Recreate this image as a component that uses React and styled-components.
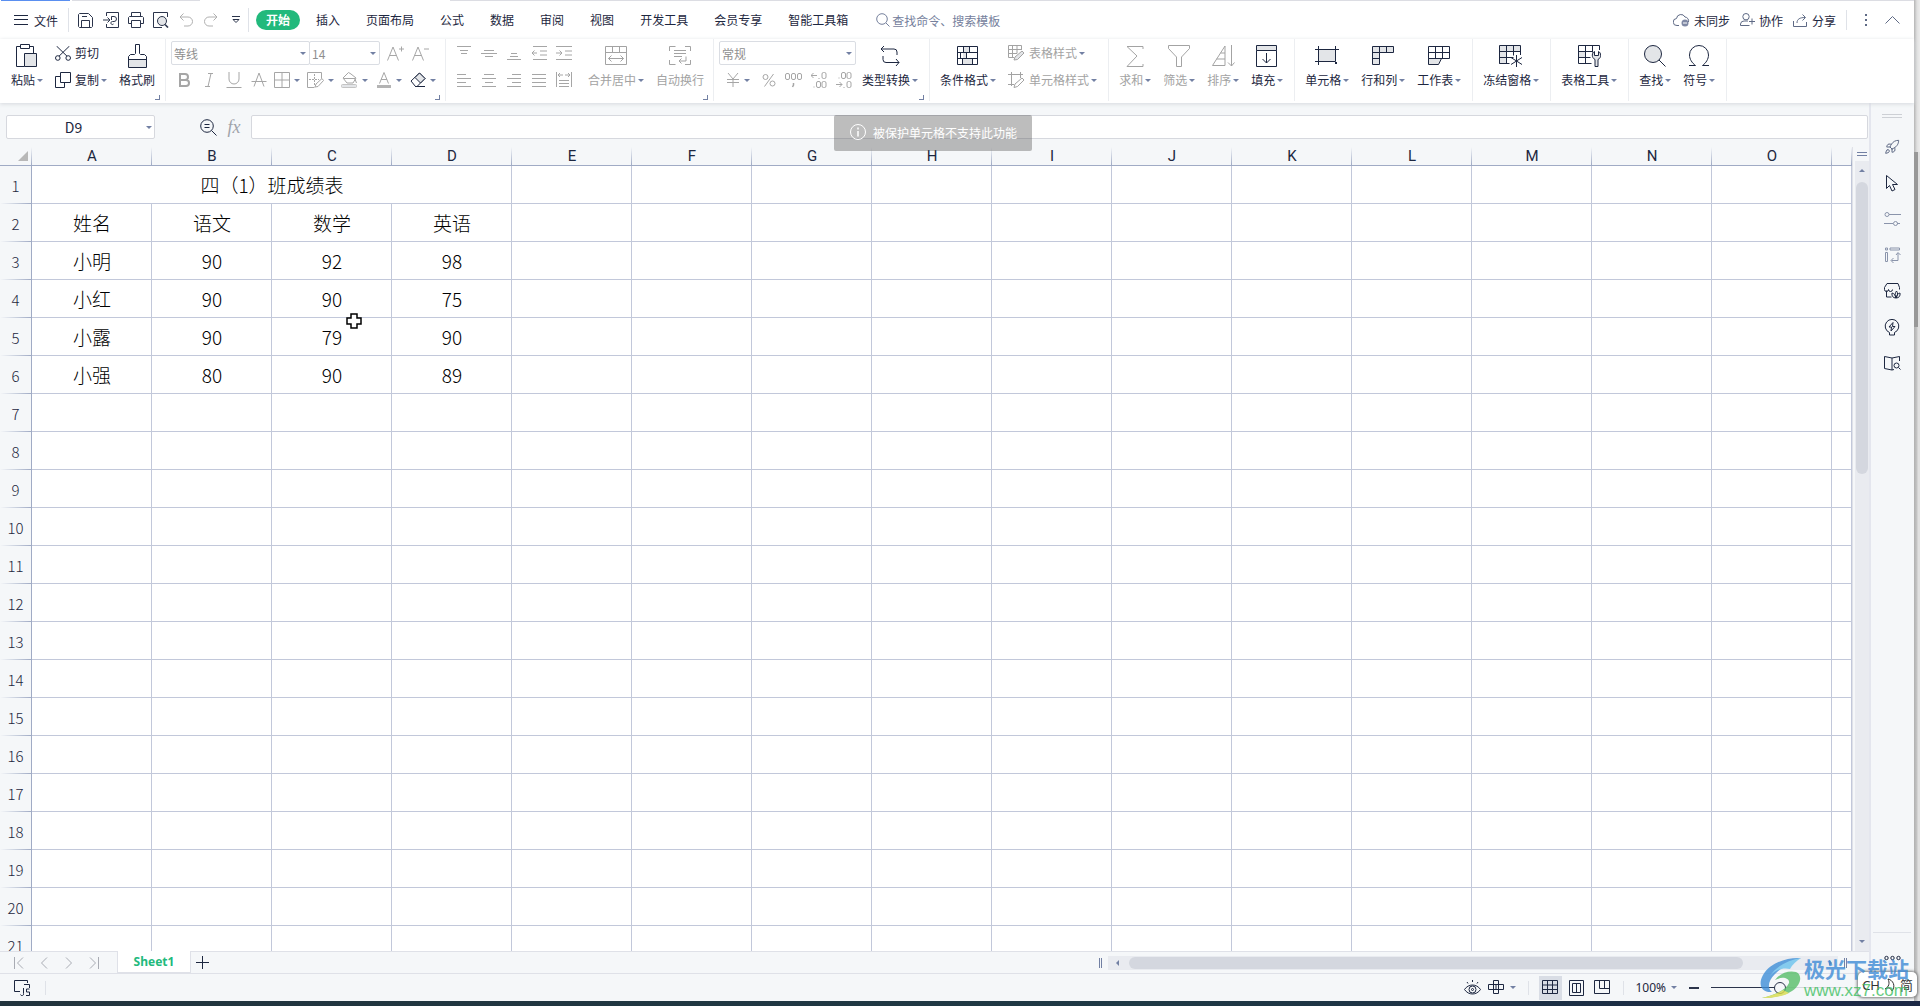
import React from 'react'
import styled, { createGlobalStyle } from 'styled-components'
import { Rocket } from 'lucide-react'

const GlobalStyle = createGlobalStyle`
    *{
        box-sizing:border-box;
    }
    body{
        margin:0;
        font-family:"Noto Sans CJK SC", sans-serif;
        font-size:12px;
        color:#1d2740;
        background:#e3e3e3;
    }
    button, input, select{
        font:inherit;
        color:inherit;
        border:none;
        background:none;
        padding:0;
        margin:0;
        outline:none;
    }
`

/* ---------- icons ---------- */
const G = "#e3e5e8"
const icons = {
    menu: [14, 12, <path d="M0 1.5h14M0 5.5h14M0 10.5h14" />],
    save: [15, 15, <path d="M1.5.5h9l4 4v9l-1 1h-12l-1-1v-12zM4 3.5h5M3.5 14.5v-7h8v7" />],
    exportDoc: [16, 16, <path d="M3.5 4V.5h12v15h-12V12M0 8h7M4.500 5.500 7 8 4.500 10.500M8.500 8V4.500H11a2.500 2.500 0 0 1 0 5H9.500a1.500 1.500 0 1 0 1 2.500" />],
    print: [16, 16, <path d="M3.5 4.5v-4h9v4M3.5 11.500h-3v-6l1-1h13l1 1v6h-3M3.5 8.5h9v7h-9z" />],
    preview: [16, 16, <><path d="M14.500 5V.5H.5v15H9" /><circle cx="9" cy="9" r="4.500" fill={G} /><path d="M12 12.500l3 3" strokeWidth="1.600" /></>],
    undo: [14, 14, <path d="M4.500.500 1 4l3.500 3.500M1 4h8a4.500 4.500 0 0 1 0 9H5" />],
    redo: [14, 14, <path d="M9.500.500 13 4 9.500 7.500M13 4H5a4.500 4.500 0 0 0 0 9h4" />],
    more: [8, 8, <path d="M0 .5h8M1 3.500h6L4 6.500z" />],
    search: [14, 14, <><circle cx="6" cy="6" r="5.300" /><path d="M10 10l3.500 3.500" /></>],
    cloud: [17, 14, <><path d="M6 12.500H4A3.500 3.500 0 0 1 3.500 5.500 4.500 4.500 0 0 1 12 4a4 4 0 0 1 3.500 5" /><circle cx="12" cy="10" r="3.500" fill="#8089a5" stroke="none" /><path d="M10 10h4" stroke="#fff" /></>],
    user: [15, 14, <><circle cx="6" cy="3.700" r="3.200" /><path d="M8 8H4a3.500 3.500 0 0 0-3.500 3v1.500h9M12 5.500v6M9 8.500h6" /></>],
    share: [15, 13, <path d="M.5 7v5.500h13V8M4 9c0-4 3-5.500 8-5.500M9.500.500l3 3-3 3" />],
    dots: [4, 14, <path d="M2 1v2M2 6v2M2 11v2" strokeWidth="2" />],
    up: [15, 8, <path d="M.5 7.500 7.500.500l7 7" />],
    paste: [22, 24, <><path d="M4 2.500H.5v20h8M14 2.500h3.500V9M4.500.500h9v4h-9z" /><path d="M8.500 9.500h12v13h-12z" fill={G} /></>],
    cut: [16, 15, <><circle cx="2.800" cy="12" r="2.300" /><circle cx="13.200" cy="12" r="2.300" /><path d="M1.500 0 12 10.200M14.500 0 4 10.200" /></>],
    copy: [16, 16, <path d="M5.500 4.500h-5v11h9v-5M5.500.500h10v10h-10z" />],
    brush: [19, 24, <><path d="M1 15.500h17v8H1z" fill={G} stroke="none" /><path d="M.5 23.500v-11l2-2h4l1-1v-9h4v9l1 1h4l2 2v11zM.5 15.500h18" /></>],
    bigA: [17, 16, <><path d="M.5 15.500 6 2l5.500 13.500M2.500 10.500h7" /><path d="M12 4h5M14.500 1.500v5" /></>],
    smallA: [17, 16, <><path d="M.5 15.500 6 2l5.500 13.500M2.500 10.500h7" /><path d="M12 4h5" /></>],
    bold: [12, 14, <path d="M2 1h5a3 3 0 0 1 0 6H2zM2 7h6a3 3 0 0 1 0 6H2z" strokeWidth="2" />],
    italic: [10, 14, <path d="M4 .5h5M1 13.500h5M7 .5l-3 13" />],
    underline: [16, 16, <path d="M3 0v7a5 5 0 0 0 10 0V0M.5 15.500h15" />],
    strike: [16, 16, <path d="M3 14.500 8 1l5 13.500M.5 9.500h15" />],
    borders: [16, 16, <path d="M.5.500h15v15H.5zM.5 8h15M8 .5v15" />],
    drawBorder: [17, 16, <><path d="M.5.500h14v6M.5.500v15h7" /><path d="M7.500 2v11M2 7.500h10" strokeDasharray="2 1" /><path d="M8 15l1-3 6-5.500 1.500 2-5.500 6z" /></>],
    bucket: [17, 16, <><path d="M7.500.500 2 6l4 5h6l3-5-5-4zM3 6.500h11M14 7l1.500 4" /><rect x=".5" y="12.500" width="15" height="3" rx="1" fill={G} stroke="#c4c4c4" /></>],
    fontColor: [16, 16, <><path d="M3.500 11.500 8 .5l4.500 11M5 7.500h6" /><path d="M1 14.500h14" strokeWidth="3" stroke="#b4b4b4" /></>],
    eraser: [16, 16, <><path d="M1 9 9.500 1 15 6.500 7 14.500H5.500z" /><path d="M5 5.500 9.500 1 15 6.500 10.500 11z" fill={G} /><path d="M5 14.500h10" /></>],
    alTop: [14, 16, <path d="M0 1.500h14M3 5.500h8M4 8.500h6" />],
    alMid: [16, 16, <path d="M3 5.500h10M0 8.500h16M4 11.500h8" />],
    alBottom: [14, 16, <path d="M4 8.500h6M3 11.500h8M0 14.500h14" />],
    outdent: [16, 16, <path d="M2 1.500h14M9 6h7M9 10h7M2 14.500h14M6 8H1M3.500 5.500 1 8l2.500 2.500" />],
    indent: [16, 16, <path d="M0 1.500h16M9 6h7M9 10h7M0 14.500h16M0 8h6M3.500 5.500 6 8l-2.500 2.500" />],
    alLeft: [14, 16, <path d="M0 2.500h9M0 6.500h14M0 10.500h9M0 14.500h14" />],
    alCenter: [14, 16, <path d="M2 2.500h10M0 6.500h14M3 10.500h8M0 14.500h14" />],
    alRight: [14, 16, <path d="M5 2.500h9M0 6.500h14M5 10.500h9M0 14.500h14" />],
    justify: [14, 16, <path d="M0 2.500h14M0 6.500h14M0 10.500h14M0 14.500h14" />],
    distribute: [16, 16, <path d="M.5 0v15M15.500 0v15M2 3h5M9 3h5M4 1 2 3l2 2M12 1l2 2-2 2M3 8.500h10M3 11.500h10M3 14.500h10" />],
    merge: [23, 20, <path d="M.5.500h21v18H.5zM.5 6.500h21M7.500.500v6M14.500.500v6M3.500 12.500h15M6.500 9.500l-3 3 3 3M15.500 9.500l3 3-3 3" />],
    wrap: [23, 20, <path d="M.5 5V.5h6M16 .5h5.500V5M.5 14v4.500h6M16 18.500h5.500V14M5 4.500h12M5 7.500h12M5 10.500h8M17 10.500v4.500h-7M12.500 12.500 10 15l2.500 2.500" />],
    yuan: [14, 14, <path d="M2 0l5 6 5-6M7 6v8M1 6.500h12M1 9.500h12" />],
    percent: [14, 14, <><circle cx="3.500" cy="4" r="2.500" /><circle cx="10.500" cy="10.500" r="2.500" /><path d="M11.500 1 2.500 13.500" /></>],
    thousands: [18, 16, <><rect x=".5" y="1.500" width="4" height="6" rx="1.500" /><rect x="6.500" y="1.500" width="4" height="6" rx="1.500" /><rect x="12.500" y="1.500" width="4" height="6" rx="1.500" /><path d="M8.500 11v2l-1 2" strokeWidth="1.500" /></>],
    decInc: [16, 16, <><path d="M0 3.500h6M2.500 1 0 3.500 2.500 6M8 6v1M3 14.500v1" /><rect x="11" y=".5" width="4" height="6" rx="1.500" /><rect x="5.500" y="9.500" width="4" height="6" rx="1.500" /><rect x="11" y="9.500" width="4" height="6" rx="1.500" /></>],
    decDec: [16, 16, <><path d="M0 12.500h6M3.500 10 6 12.500 3.500 15M8 15v1M3 5.500v1" /><rect x="5.500" y=".5" width="4" height="6" rx="1.500" /><rect x="11" y=".5" width="4" height="6" rx="1.500" /><rect x="11" y="9.500" width="4" height="6" rx="1.500" /></>],
    convert: [20, 22, <path d="M4 1 1 4l3 3M1 4h13a3 3 0 0 1 3 3v3M16 14l3 3.500-3 3.500M19 17.500H6a3 3 0 0 1-3-3V11" />],
    condFormat: [22, 20, <><path d="M6 .5h6v6H6zM9 6.500h-3v6h3zM1 12.500h14v6H6v-6z" fill={G} stroke="none" /><path d="M.5.500h20v18H.5zM.5 6.500h20M.5 12.500h20M6.500.500v6M12.500.500v6M9.500 6.500v6M5.500 12.500v6M15.500 12.500v6M3.500 6.500v6" /></>],
    tableStyle: [17, 16, <><path d="M13.500 5V.5h-13v12H6M.5 4.500h13M.5 8.500H9M4.500.500v12M9 .5v8" /><path d="M6 15l1-3 7-6 2 2-6.500 6.500z" fill={G} /></>],
    cellStyle: [17, 16, <path d="M3.500 0v14M0 2.500h15M12.500 0v6M0 12.500h6M6 15.500l1-3.500 7-6 2 2-6.500 6.500z" />],
    sum: [18, 21, <path d="M17 3V.5H1L11 10 1 20.500h16V18" />],
    filter: [22, 22, <path d="M.5.500h21v3L13.500 12v9.500h-5V12L.5 3.500z" />],
    sort: [23, 22, <path d="M.5 20.500 13 1v19.500zM8.500 8h4.500M4.500 14h8.500M19.500 0v21M16 17.500l3.500 3.500 3-3.500" />],
    fill: [22, 23, <><path d="M.5.500h20v5H.5z" fill={G} /><path d="M.5 5.500v16h20v-16M10.500 8v10M6.500 14l4 4 4-4" /></>],
    cell: [24, 20, <><path d="M3.500 3.500h17v12h-17z" fill={G} /><path d="M3.500 0v19M20.500 0v13M0 3.500h24M0 15.500h19" /><path d="M20 17h2" strokeWidth="2" /></>],
    rowCol: [23, 20, <><path d="M.5.500h21v6H7.500v12h-7z" fill={G} /><path d="M.5 6.500h7v-6M14.500.500v6M.5 12.500h7" /></>],
    worksheet: [23, 20, <><path d="M.5 12.500h13l-3 6H.5z" fill={G} /><path d="M.5.500h21v12H.5zM.5 6.500h21M7.500.500v12M14.500.500v12" /></>],
    freeze: [24, 22, <><path d="M.5.500h21v6h-14v12h-7z" fill={G} /><path d="M.5 6.500h7v-6M14.500.500v6M.5 12.500h14M.5 18.500h10M14.500 6.500v4M21.500 6v4M17.500 10v12M12 12.500l11 7M23 12.500l-11 7" /></>],
    tableTool: [23, 22, <><path d="M.5 6.500h7v6h-7z" fill={G} /><path d="M21.500 5V.5H.5v18h13M.5 6.500h14M.5 12.500h12M7.500.500v18M14.500.500v7" /><path d="M17 21.500v-7c-4-2-3-7-.5-8v4h4v-4c2.500 1 3.500 6-.5 8v7z" fill={G} /></>],
    find: [22, 22, <><circle cx="9" cy="9" r="8.500" fill={G} /><path d="M15 15l6.500 6.500" /></>],
    omega: [22, 22, <path d="M1 20.500h6.500C4 18 1.500 14 1.500 10a9.500 9.500 0 0 1 19 0c0 4-2.500 8-6 10.500H21" />],
    zoomOut: [17, 17, <><circle cx="7" cy="7" r="6.300" /><path d="M4.500 5.500h5M4.500 8.500h5M11.500 11.500l5 5" /></>],
    info: [16, 16, <><circle cx="8" cy="8" r="7.500" /><path d="M8 3.500v2M8 7v5.500" strokeWidth="1.500" /></>],
    pointer: [16, 17, <path d="M2.500.500v13l3-3 2.500 5.500 3-1.500-2.500-5h5z" />],
    sliders: [17, 16, <><circle cx="3" cy="3.500" r="2" /><path d="M5 3.500h12M0 12.500h9M13 12.500h3" /><circle cx="11.500" cy="12.500" r="2" /></>],
    pivot: [17, 16, <path d="M1.500 1h2v2h-2zM6 1h9.500v2H6zM1.500 5.500h2v9h-2zM14 6v7.500H7.500M12 8l2-2.500L16.500 8M9.500 11l-2.500 2.500L9.500 16" />],
    shop: [17, 16, <><path d="M2.500 7.500v6.500h5M3 .5h11l1.500 4v2M.5 6.500v-2L3 .5M.5 6.500a2 2 0 0 0 4 0 2 2 0 0 0 4 0" /><path d="M12 15c-3 0-4.500-2-4-5 2 .5 3 1.500 4 5zM12 15c-1.500-3-1-5 .5-7 1.500 2 1.500 4-.5 7zM12 15c3 0 4.500-2 4-5-2 .5-3 1.500-4 5z" /></>],
    bulb: [16, 17, <><path d="M5.500 16v-2.500a6.800 6.800 0 1 1 5 0V16z" /><path d="M9 3.500 5 8h2.500l-.5 4 4-4.500H8.500z" /></>],
    book: [17, 15, <><path d="M8 2 .5.500v12L8 14zM8 2l7.500-1.500V5M8 14l2-.5" /><circle cx="12.500" cy="9.500" r="2.500" /><path d="M14.500 11.500l2 2" /></>],
    first: [10, 12, <path d="M.5 0v12M9 .5 3.500 6 9 11.500" />],
    prev: [8, 12, <path d="M7 .5 1.500 6 7 11.500" />],
    next: [8, 12, <path d="M1 .5 6.500 6 1 11.500" />],
    last: [10, 12, <path d="M9.500 0v12M1 .5 6.500 6 1 11.500" />],
    plus: [13, 13, <path d="M6.500 0v13M0 6.500h13" />],
    macro: [17, 16, <path d="M6 11.500H.5v-11h13V3M10 4.500h5.500V8M9.500 8v5.500a1.500 1.500 0 0 1-3 1M15.500 9h-3v3h3v3.500h-3.500" />],
    eye: [17, 16, <><path d="M.5 9.500c4-6 12-6 16 0-4 6-12 6-16 0z" /><circle cx="8.500" cy="9.500" r="3.500" /><circle cx="8.500" cy="9.500" r="1" /><path d="M3 2l1 1.500M8.500 0v2M14 2l-1 1.500" /></>],
    cross: [17, 15, <path d="M5.500.500h5v13h-5zM.5 4.500h15v5H.5zM8 4.500v5" />],
    gridView: [17, 15, <path d="M.5.500h15v13H.5zM.5 5h15M.5 9.500h15M5.500.500v13M10.500.500v13" />],
    pageView: [16, 16, <path d="M.5.500h14v15H.5zM3.500 3.500h8v9h-8zM7.500 3.500v9" />],
    breakView: [17, 15, <path d="M.5.500h15v13H.5zM5.500.500v8h10M10.500.500v8" />],
    triple: [17, 6, <><circle cx="2.500" cy="3" r="1.700" /><circle cx="8.500" cy="3" r="1.700" /><circle cx="14.500" cy="3" r="1.700" /></>],
    moon: [12, 14, <path d="M4 1c5 1 8 7 4 12-1-3-4-4-7-2 4-2 5-6 3-10z" />],
}

const Svg = styled.svg`
    display:block;
    flex:none;
    fill:none;
    stroke:currentColor;
    stroke-width:1;
`
const Icon = ({ name }) => {
    const [w, h, shape] = icons[name]
    return <Svg width={w} height={h} viewBox={`0 0 ${w} ${h}`} aria-hidden="true">{shape}</Svg>
}

const Arrow = styled.span`
    flex:none;
    width:6px;
    border:3px solid transparent;
    border-top-color:#7280a3;
    border-bottom:none;
`

/* ---------- frame ---------- */
const Page = styled.div`
    position:relative;
    display:flex;
    flex-direction:column;
    height:100vh;
    overflow:hidden;
`
const Desktop = styled.div`
    flex:1;
    display:flex;
    min-height:0;
`
const Window = styled.div`
    flex:1;
    display:flex;
    flex-direction:column;
    min-width:0;
    background:#f5f7f9;
`
const Edge = styled.div`
    width:6px;
    display:flex;
    flex-direction:column;
    background:linear-gradient(to right, #b0b0b0, #c6c6c6 3px, #e0e0e0 4px);
`
const EdgeGap = styled.div`
    height:152px;
    background:linear-gradient(to right, #b5b5b5, #e0e0e0 3px, #ececec);
`
const EdgeThumb = styled.div`
    width:4px;
    height:175px;
    background:#989898;
`
const Taskbar = styled.div`
    height:5px;
    background:linear-gradient(to right, #22343d, #1f3945 60%, #1b2744);
`
const DocTabs = styled.div`
    display:flex;
    gap:2px;
    height:1px;
    padding-left:1px;
    background:#fff;
`
const DocTab = styled.span`
    width:${(props) => props.$w};
    flex:${(props) => props.$grow ? "1" : "none"};
    background:${(props) => props.color};
`

/* ---------- menu bar ---------- */
const MenuBar = styled.div`
    display:flex;
    align-items:center;
    height:38px;
    padding:0 14px 0 14px;
    background:#fff;
`
const FileButton = styled.button`
    display:flex;
    align-items:center;
    gap:6px;
`
const VLine = styled.span`
    width:1px;
    height:${(props) => props.$h || "24px"};
    background:#dfe2e8;
    margin:${(props) => props.$m || "0"};
`
const QuickButton = styled.button`
    display:flex;
    align-items:center;
    justify-content:center;
    width:25px;
    height:24px;
    color:${(props) => props.disabled ? "#b0b0b0" : "#2b344b"};
`
const Tabs = styled.nav`
    display:flex;
    margin-left:4px;
`
const Tab = styled.button`
    height:20px;
    line-height:20px;
    padding:${(props) => props.$active ? "0 10px" : "0 13px"};
    margin:${(props) => props.$active ? "0 3px" : "0"};
    border-radius:10px;
    font-weight:${(props) => props.$active && "700"};
    color:${(props) => props.$active && "white"};
    background:${(props) => props.$active && "#22b97c"};
`
const SearchBox = styled.label`
    display:flex;
    align-items:center;
    gap:2px;
    flex:1;
    margin-left:15px;
    color:#75809c;
`
const SearchInput = styled.input`
    width:160px;
    &::placeholder{
        color:#75809c;
        opacity:1;
    }
`
const MenuRight = styled.div`
    display:flex;
    align-items:center;
    gap:10px;
`
const MenuLink = styled.button`
    display:flex;
    align-items:center;
    gap:4px;
    svg{
        color:#5f6a85;
    }
`
const PlainButton = styled.button`
    display:flex;
    color:#5f6a85;
    margin-left:7px;
`

/* ---------- ribbon ---------- */
const Ribbon = styled.div`
    display:flex;
    height:64px;
    background:#fff;
    box-shadow:0 1px 4px #d5d8dd;
    z-index:1;
`
const Group = styled.div`
    position:relative;
    flex:none;
    display:flex;
    align-items:flex-start;
    gap:${(props) => props.$gap || "12px"};
    height:62px;
    padding:${(props) => props.$pad || "2px 11px 0 10px"};
    border-right:1px solid #eceef1;
`
const Launcher = styled.button`
    position:absolute;
    right:5px;
    bottom:1px;
    width:5px;
    height:5px;
    border-right:1px solid #7280a3;
    border-bottom:1px solid #7280a3;
`
const BigButton = styled.button`
    display:flex;
    flex-direction:column;
    align-items:center;
    gap:3px;
    padding-top:3px;
    color:${(props) => props.disabled ? "#a3a3a3" : "#1d2740"};
`
const BigIcon = styled.span`
    display:flex;
    align-items:center;
    justify-content:center;
    height:24px;
`
const Caption = styled.span`
    display:flex;
    align-items:center;
    gap:2px;
    line-height:18px;
    white-space:nowrap;
`
const Rows = styled.div`
    display:flex;
    flex-direction:column;
    gap:3px;
`
const Row = styled.div`
    display:flex;
    align-items:center;
    height:24px;
    padding-left:${(props) => props.$indent && "3px"};
`
const LineButton = styled.button`
    display:flex;
    align-items:center;
    gap:4px;
    height:24px;
    color:${(props) => props.disabled ? "#a3a3a3" : "#1d2740"};
`
const IconButton = styled.button`
    display:flex;
    align-items:center;
    justify-content:center;
    gap:4px;
    width:${(props) => props.$drop ? "34px" : "25px"};
    height:24px;
    padding-right:${(props) => props.$drop && "3px"};
    color:${(props) => props.$on ? "#1d2740" : "#a6a6a6"};
`
const SelectWrap = styled.span`
    display:flex;
    align-items:center;
    width:${(props) => props.$w};
    height:24px;
    margin-right:${(props) => props.$last && "3px"};
    margin-left:${(props) => props.$joined && "-1px"};
    padding-right:3px;
    border:1px solid #dadde3;
    border-radius:2px;
`
const Select = styled.select`
    appearance:none;
    flex:1;
    min-width:0;
    height:22px;
    padding-left:2px;
    color:#8f8f8f;
`

const Big = ({ icon, children, drop, off }) => (
    <BigButton disabled={off}>
        <BigIcon><Icon name={icon} /></BigIcon>
        <Caption>{children}{drop && <Arrow />}</Caption>
    </BigButton>
)
const Line = ({ icon, children, drop, off }) => (
    <LineButton disabled={off}>
        <Icon name={icon} />
        <Caption>{children}{drop && <Arrow />}</Caption>
    </LineButton>
)
const Small = ({ icon, label, drop, on }) => (
    <IconButton $drop={drop} $on={on} aria-label={label} title={label}>
        <Icon name={icon} />{drop && <Arrow />}
    </IconButton>
)
const Dropdown = ({ w, label, value, joined, last }) => (
    <SelectWrap $w={w} $joined={joined} $last={last}>
        <Select aria-label={label} defaultValue={value}><option>{value}</option></Select>
        <Arrow />
    </SelectWrap>
)

/* ---------- sheet ---------- */
const Body = styled.div`
    flex:1;
    display:flex;
    min-height:0;
`
const Main = styled.div`
    position:relative;
    flex:1;
    display:flex;
    flex-direction:column;
    min-width:0;
`
const FormulaBar = styled.div`
    display:flex;
    align-items:center;
    height:44px;
    padding:4px 1px 0 6px;
`
const NameBox = styled.div`
    display:flex;
    align-items:center;
    width:149px;
    height:24px;
    padding-right:2px;
    margin-right:45px;
    background:#fff;
    border:1px solid #d6d8de;
    border-radius:2px;
`
const NameInput = styled.input`
    flex:1;
    min-width:0;
    padding-right:6px;
    text-align:center;
    font-size:14px;
    line-height:20px;
`
const Fx = styled.button`
    width:16px;
    margin:0 9px 0 9px;
    font-family:"Liberation Serif", serif;
    font-style:italic;
    font-size:18px;
    line-height:24px;
    color:#a0a3aa;
`
const FormulaInput = styled.input`
    flex:1;
    height:24px;
    padding:0 6px;
    background:#fff;
    border:1px solid #d6d8de;
    border-radius:2px;
`
const ToastLayer = styled.div`
    position:absolute;
    top:12px;
    left:0;
    right:0;
    display:flex;
    justify-content:center;
    padding-right:3px;
    pointer-events:none;
`
const Toast = styled.div`
    display:flex;
    align-items:center;
    gap:7px;
    height:36px;
    padding:0 15px 2px 16px;
    color:#fff;
    background:rgba(90,90,90,0.4);
    border-radius:2px;
`
const SheetArea = styled.div`
    flex:1;
    display:flex;
    min-height:0;
`
const Viewport = styled.div`
    flex:1;
    min-width:0;
    overflow:hidden;
    background:#fff;
`
const Table = styled.table`
    width:100%;
    table-layout:fixed;
    border-collapse:separate;
    border-spacing:0;
`
const Col = styled.col`
    width:${(props) => props.$w};
`
const ColHead = styled.th`
    height:19px;
    padding:0;
    font-family:Roboto, sans-serif;
    font-size:15px;
    line-height:18px;
    font-weight:400;
    border-bottom:1px solid #a0abc5;
    background:linear-gradient(to bottom, #f5f7f9, #a0abc5) right/1px 100% no-repeat #f5f7f9;
`
const Corner = styled.span`
    display:block;
    margin-left:18px;
    width:10px;
    border-left:10px solid transparent;
    border-bottom:10px solid #b8b8b8;
`
const RowHead = styled.th`
    height:38px;
    padding:0;
    font-size:15px;
    font-weight:300;
    border-right:1px solid #a0abc5;
    background:linear-gradient(to right, #f5f7f9, #a0abc5) bottom/100% 1px no-repeat #f5f7f9;
`
const Cell = styled.td`
    height:38px;
    padding:1px 0 0 1px;
    text-align:center;
    font-size:19px;
    font-weight:300;
    line-height:28px;
    color:#000;
    border-right:1px solid #c2c8da;
    border-bottom:1px solid #c2c8da;
`
const Mouse = styled.svg`
    position:absolute;
    left:346px;
    top:313px;
`
const VScroll = styled.div`
    display:flex;
    flex-direction:column;
    width:17px;
    padding-left:2px;
    border-left:1px solid #dfe1e8;
`
const Splitter = styled.span`
    width:10px;
    height:4px;
    margin:5px 2px;
    border-top:1px solid #7280a3;
    border-bottom:1px solid #7280a3;
`
const Track = styled.div`
    flex:1;
    display:flex;
    flex-direction:column;
    align-items:center;
    padding:8px 1px;
    background:#e9ebf0;
`
const Rail = styled.div`
    flex:1;
    align-self:stretch;
    margin:10px 0;
`
const Thumb = styled.div`
    width:${(props) => props.$w};
    height:${(props) => props.$h};
    border-radius:6px;
    background:#d4d7df;
`
const Tip = styled.span`
    flex:none;
    border:3px solid transparent;
    border-${(props) => props.$side}-color:#7280a3;
    border-${(props) => props.$opposite}:none;
`

/* ---------- side bar ---------- */
const Side = styled.aside`
    display:flex;
    flex-direction:column;
    align-items:center;
    width:45px;
    padding:11px 3px 12px 2px;
    border-left:2px solid #e4e6ee;
`
const Grip = styled.span`
    width:20px;
    height:4px;
    margin-bottom:11px;
    border-top:1px solid #cdd0d5;
    border-bottom:1px solid #cdd0d5;
`
const SideButton = styled.button`
    display:flex;
    align-items:center;
    justify-content:center;
    width:36px;
    height:36px;
    color:${(props) => props.color || "#1d2740"};
`
const SideFoot = styled.div`
    display:flex;
    justify-content:center;
    align-self:stretch;
    margin-top:auto;
    padding-top:22px;
    border-top:1px solid #dfe2e8;
`

/* ---------- bottom bars ---------- */
const TabBar = styled.div`
    display:flex;
    align-items:center;
    height:22px;
    padding:0 16px 0 6px;
    border-top:1px solid #dfe1e8;
`
const NavButton = styled.button`
    display:flex;
    justify-content:center;
    width:25px;
    color:#a8abb3;
`
const SheetTab = styled.button`
    width:74px;
    height:22px;
    margin:-1px 5px 0 11px;
    line-height:21px;
    font-family:"Noto Sans", sans-serif;
    font-weight:700;
    color:#22b97c;
    background:#fff;
    border:1px solid #dfe1e8;
    border-top:none;
`
const Bars = styled.span`
    width:3px;
    height:10px;
    margin:0 6px;
    border-left:1px solid #7280a3;
    border-right:1px solid #7280a3;
`
const HScroll = styled.div`
    display:flex;
    align-items:center;
    width:calc(40% - 9px);
    height:14px;
    padding:1px 6px 1px 8px;
    background:#e9ebf0;
`
const HRail = styled.div`
    flex:1;
    height:12px;
    margin:0 10px;
`
const Spacer = styled.span`
    flex:1;
`
const StatusBar = styled.footer`
    display:flex;
    align-items:center;
    height:28px;
    padding:0 66px 0 14px;
    border-top:1px solid #dfe1e8;
    font-family:"Noto Sans", sans-serif;
`
const StatusButton = styled.button`
    display:flex;
    align-items:center;
    gap:5px;
    margin-right:${(props) => props.$gap};
`
const ViewButton = styled.button`
    display:flex;
    align-items:center;
    justify-content:center;
    width:23px;
    height:24px;
    margin-right:3px;
    background:${(props) => props.$active && "#d9dde5"};
`
const Minus = styled.button`
    width:10px;
    height:2px;
    margin:0 12px 0 12px;
    background:#2b344b;
`
const Zoom = styled.input`
    appearance:none;
    width:137px;
    height:12px;
    background:linear-gradient(to right, #2b344b 50%, #d5d8de 50%) center/100% 1px no-repeat;
    &::-webkit-slider-thumb{
        appearance:none;
        width:12px;
        height:12px;
        border:1px solid #2b344b;
        border-radius:50%;
        background:#f5f7f9;
    }
`
const ImeBox = styled.div`
    position:absolute;
    right:3px;
    bottom:9px;
    display:flex;
    align-items:center;
    gap:4px;
    height:25px;
    padding:0 4px;
    font-family:"Noto Sans", "Noto Sans CJK SC", sans-serif;
    font-size:13px;
    line-height:20px;
    color:#333;
    background:#fff;
    border-radius:5px;
    box-shadow:0 0 3px 1px #777;
`
const Watermark = styled.div`
    position:absolute;
    right:11px;
    bottom:6px;
    display:flex;
    align-items:center;
    gap:1px;
    opacity:0.8;
    pointer-events:none;
`
const MarkText = styled.div`
    font-size:21px;
    line-height:25px;
    font-weight:700;
    color:#3f8bd6;
`
const MarkUrl = styled.div`
    font-family:"Liberation Sans", sans-serif;
    font-size:17px;
    line-height:19px;
    font-weight:400;
    color:#3fc062;
`

const menus = ["开始", "插入", "页面布局", "公式", "数据", "审阅", "视图", "开发工具", "会员专享", "智能工具箱"]
const columns = "ABCDEFGHIJKLMNO".split("")
const scores = [
    ["姓名", "语文", "数学", "英语"],
    ["小明", 90, 92, 98],
    ["小红", 90, 90, 75],
    ["小露", 90, 79, 90],
    ["小强", 80, 90, 89],
]
const rowNumbers = Array.from({ length: 21 }, (_, i) => i + 1)

const Menu = () => (
    <MenuBar>
        <FileButton><Icon name="menu" />文件</FileButton>
        <VLine $m="0 4px 0 10px" />
        <QuickButton aria-label="保存"><Icon name="save" /></QuickButton>
        <QuickButton aria-label="输出"><Icon name="exportDoc" /></QuickButton>
        <QuickButton aria-label="打印"><Icon name="print" /></QuickButton>
        <QuickButton aria-label="预览"><Icon name="preview" /></QuickButton>
        <QuickButton aria-label="撤销" disabled><Icon name="undo" /></QuickButton>
        <QuickButton aria-label="恢复" disabled><Icon name="redo" /></QuickButton>
        <QuickButton aria-label="更多"><Icon name="more" /></QuickButton>
        <VLine />
        <Tabs>
            {menus.map((item, i) => <Tab key={item} $active={i === 0}>{item}</Tab>)}
        </Tabs>
        <SearchBox>
            <Icon name="search" />
            <SearchInput placeholder="查找命令、搜索模板" aria-label="查找命令" />
        </SearchBox>
        <MenuRight>
            <MenuLink><Icon name="cloud" />未同步</MenuLink>
            <MenuLink><Icon name="user" />协作</MenuLink>
            <MenuLink><Icon name="share" />分享</MenuLink>
            <VLine $h="20px" />
            <PlainButton aria-label="更多操作"><Icon name="dots" /></PlainButton>
            <PlainButton aria-label="收起功能区"><Icon name="up" /></PlainButton>
        </MenuRight>
    </MenuBar>
)

const Tools = () => (
    <Ribbon>
        <Group $pad="2px 10px 0 11px">
            <Big icon="paste" drop>粘贴</Big>
            <Rows>
                <Line icon="cut">剪切</Line>
                <Line icon="copy" drop>复制</Line>
            </Rows>
            <Big icon="brush">格式刷</Big>
            <Launcher aria-label="剪贴板" />
        </Group>
        <Group $pad="2px 4px 0 5px">
            <Rows>
                <Row>
                    <Dropdown w="139px" label="字体" value="等线" />
                    <Dropdown w="71px" label="字号" value="14" joined last />
                    <Small icon="bigA" label="增大字号" />
                    <Small icon="smallA" label="减小字号" />
                </Row>
                <Row>
                    <Small icon="bold" label="加粗" />
                    <Small icon="italic" label="倾斜" />
                    <Small icon="underline" label="下划线" />
                    <Small icon="strike" label="删除线" />
                    <Small icon="borders" label="边框" drop />
                    <Small icon="drawBorder" label="绘图边框" drop />
                    <Small icon="bucket" label="填充颜色" drop />
                    <Small icon="fontColor" label="字体颜色" drop />
                    <Small icon="eraser" label="清除" drop on />
                </Row>
            </Rows>
            <Launcher aria-label="字体设置" />
        </Group>
        <Group $pad="2px 9px 0 5px">
            <Rows>
                <Row>
                    <Small icon="alTop" label="顶端对齐" />
                    <Small icon="alMid" label="垂直居中" />
                    <Small icon="alBottom" label="底端对齐" />
                    <Small icon="outdent" label="减少缩进" />
                    <Small icon="indent" label="增加缩进" />
                </Row>
                <Row>
                    <Small icon="alLeft" label="左对齐" />
                    <Small icon="alCenter" label="水平居中" />
                    <Small icon="alRight" label="右对齐" />
                    <Small icon="justify" label="两端对齐" />
                    <Small icon="distribute" label="分散对齐" />
                </Row>
            </Rows>
            <Big icon="merge" drop off>合并居中</Big>
            <Big icon="wrap" off>自动换行</Big>
            <Launcher aria-label="对齐设置" />
        </Group>
        <Group $gap="6px" $pad="2px 11px 0 5px">
            <Rows>
                <Row><Dropdown w="137px" label="数字格式" value="常规" /></Row>
                <Row $indent>
                    <Small icon="yuan" label="货币" drop />
                    <Small icon="percent" label="百分比" />
                    <Small icon="thousands" label="千位分隔" />
                    <Small icon="decInc" label="增加小数位" />
                    <Small icon="decDec" label="减少小数位" />
                </Row>
            </Rows>
            <Big icon="convert" drop>类型转换</Big>
            <Launcher aria-label="数字设置" />
        </Group>
        <Group>
            <Big icon="condFormat" drop>条件格式</Big>
            <Rows>
                <Line icon="tableStyle" drop off>表格样式</Line>
                <Line icon="cellStyle" drop off>单元格样式</Line>
            </Rows>
        </Group>
        <Group>
            <Big icon="sum" drop off>求和</Big>
            <Big icon="filter" drop off>筛选</Big>
            <Big icon="sort" drop off>排序</Big>
            <Big icon="fill" drop>填充</Big>
        </Group>
        <Group>
            <Big icon="cell" drop>单元格</Big>
            <Big icon="rowCol" drop>行和列</Big>
            <Big icon="worksheet" drop>工作表</Big>
        </Group>
        <Group><Big icon="freeze" drop>冻结窗格</Big></Group>
        <Group><Big icon="tableTool" drop>表格工具</Big></Group>
        <Group>
            <Big icon="find" drop>查找</Big>
            <Big icon="omega" drop>符号</Big>
        </Group>
    </Ribbon>
)

const Grid = () => (
    <Table>
        <colgroup>
            <Col $w="32px" />
            {columns.map((c) => <Col key={c} $w="120px" />)}
            <Col />
        </colgroup>
        <thead>
            <tr>
                <ColHead><Corner /></ColHead>
                {columns.map((c) => <ColHead key={c} scope="col">{c}</ColHead>)}
                <ColHead />
            </tr>
        </thead>
        <tbody>
            {rowNumbers.map((n) => {
                const values = scores[n - 2] || []
                return (
                    <tr key={n}>
                        <RowHead scope="row">{n}</RowHead>
                        {n === 1 && <Cell colSpan={4}>四（1）班成绩表</Cell>}
                        {columns.slice(n === 1 ? 4 : 0).map((c, i) => <Cell key={c}>{values[i]}</Cell>)}
                        <Cell />
                    </tr>
                )
            })}
        </tbody>
    </Table>
)

const SideBar = () => (
    <Side>
        <Grip />
        <SideButton aria-label="推荐" color="#5f6a85"><Rocket size={16} strokeWidth={1.5} /></SideButton>
        <SideButton aria-label="选择"><Icon name="pointer" /></SideButton>
        <SideButton aria-label="属性" color="#8a94ab"><Icon name="sliders" /></SideButton>
        <SideButton aria-label="透视表" color="#8a94ab"><Icon name="pivot" /></SideButton>
        <SideButton aria-label="素材"><Icon name="shop" /></SideButton>
        <SideButton aria-label="帮助"><Icon name="bulb" /></SideButton>
        <SideButton aria-label="查阅"><Icon name="book" /></SideButton>
        <SideFoot><Icon name="triple" /></SideFoot>
    </Side>
)

const Logo = () => (
    <svg width="44" height="42" viewBox="0 0 44 42" aria-hidden="true">
        <path d="M42 1C28 0 11 6 4 18c-6 11 0 18 9 17-5-4-4-11 3-18C23 10 32 4 42 1z" fill="#3f8fd8" />
        <path d="M42 1C30 3 17 9 11 19c5-6 13-9 20-7C33 8 37 4 42 1z" fill="#6cc4ee" />
        <path d="M16 23c5-7 14-10 21-8 7 3 5 13-4 19-8 5-20 7-30 7 12-3 24-8 27-15 1-5-7-7-14-3z" fill="#57be69" />
        <path d="M3 41c8-2 15-4 21-8l6 3c-8 4-18 5-27 5z" fill="#d9dc4a" />
    </svg>
)

const App = () => {
    return (
        <Page>
            <GlobalStyle />
            <Desktop>
                <Window>
                    <DocTabs>
                        <DocTab $w="69px" color="#5a8ff0" />
                        <DocTab $w="128px" color="#dcdde3" />
                        <DocTab $w="246px" color="#fff" />
                        <DocTab $grow color="#dcdde3" />
                    </DocTabs>
                    <Menu />
                    <Tools />
                    <Body>
                        <Main>
                            <FormulaBar>
                                <NameBox>
                                    <NameInput defaultValue="D9" aria-label="名称框" />
                                    <Arrow />
                                </NameBox>
                                <Icon name="zoomOut" />
                                <Fx aria-label="插入函数">fx</Fx>
                                <FormulaInput aria-label="编辑栏" />
                            </FormulaBar>
                            <SheetArea>
                                <Viewport><Grid /></Viewport>
                                <VScroll>
                                    <Splitter />
                                    <Track>
                                        <Tip $side="bottom" $opposite="top" />
                                        <Rail><Thumb $w="100%" $h="39%" /></Rail>
                                        <Tip $side="top" $opposite="bottom" />
                                    </Track>
                                </VScroll>
                            </SheetArea>
                            <TabBar>
                                <NavButton aria-label="第一个"><Icon name="first" /></NavButton>
                                <NavButton aria-label="上一个"><Icon name="prev" /></NavButton>
                                <NavButton aria-label="下一个"><Icon name="next" /></NavButton>
                                <NavButton aria-label="最后一个"><Icon name="last" /></NavButton>
                                <SheetTab>Sheet1</SheetTab>
                                <Icon name="plus" />
                                <Spacer />
                                <Bars />
                                <HScroll>
                                    <Tip $side="right" $opposite="left" />
                                    <HRail><Thumb $w="89%" $h="12px" /></HRail>
                                    <Tip $side="left" $opposite="right" />
                                </HScroll>
                                <Bars />
                            </TabBar>
                            <ToastLayer>
                                <Toast role="status"><Icon name="info" />被保护单元格不支持此功能</Toast>
                            </ToastLayer>
                        </Main>
                        <SideBar />
                    </Body>
                    <StatusBar>
                        <StatusButton aria-label="宏"><Icon name="macro" /></StatusButton>
                        <VLine $h="14px" $m="0 0 0 14px" />
                        <Spacer />
                        <StatusButton $gap="7px" aria-label="护眼模式"><Icon name="eye" /></StatusButton>
                        <StatusButton $gap="12px" aria-label="阅读模式"><Icon name="cross" /><Arrow /></StatusButton>
                        <VLine $h="14px" $m="0 10px 0 0" />
                        <ViewButton $active aria-label="普通视图"><Icon name="gridView" /></ViewButton>
                        <ViewButton aria-label="页面视图"><Icon name="pageView" /></ViewButton>
                        <ViewButton aria-label="分页预览"><Icon name="breakView" /></ViewButton>
                        <VLine $h="14px" $m="0 11px 0 6px" />
                        <StatusButton>100%<Arrow /></StatusButton>
                        <Minus aria-label="缩小" />
                        <Zoom type="range" min="0" max="200" defaultValue="100" aria-label="缩放" />
                    </StatusBar>
                </Window>
                <Edge>
                    <EdgeGap />
                    <EdgeThumb />
                </Edge>
            </Desktop>
            <Taskbar />
            <Mouse width="16" height="16" viewBox="0 0 16 16" aria-hidden="true">
                <path d="M5 1h6v4h4v6h-4v4H5v-4H1V5h4z" fill="#fff" stroke="#000" strokeWidth="1.500" />
            </Mouse>
            <ImeBox><span>CH</span><Icon name="moon" /><span>简</span></ImeBox>
            <Watermark>
                <Logo />
                <div>
                    <MarkText>极光下载站</MarkText>
                    <MarkUrl>www.xz7.com</MarkUrl>
                </div>
            </Watermark>
        </Page>
    )
}
export default App
